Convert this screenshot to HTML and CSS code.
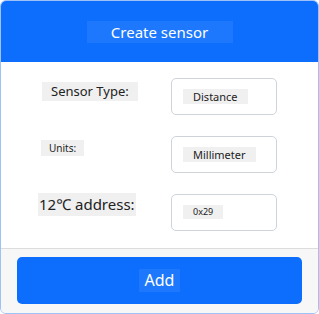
FILE: index.html
```html
<!DOCTYPE html>
<html lang="en">
<head>
    <meta charset="UTF-8">
    <meta name="viewport" content="width=device-width, initial-scale=1.0">
    <title>Create sensor</title>
    <link rel="stylesheet" href="styles.css">
</head>
<body>
    <div class="card">
        <div class="card-header">
            <span class="title">Create sensor</span>
        </div>

        <div class="card-body">
            <div class="form-row">
                <span class="label label-type">Sensor Type:</span>
                <div class="field"><span class="value value-type">Distance</span></div>
            </div>
            <div class="form-row">
                <span class="label label-units">Units:</span>
                <div class="field"><span class="value value-units">Millimeter</span></div>
            </div>
            <div class="form-row row-address">
                <span class="label label-address">12℃ address:</span>
                <div class="field"><span class="value value-address">0x29</span></div>
            </div>
        </div>

        <div class="card-footer">
            <button type="button" class="add-button"><span>Add</span></button>
        </div>
    </div>
</body>
</html>
```

FILE: styles.css
```css
* {
    box-sizing: border-box;
}
body {
    margin: 0;
    font-family: "Noto Sans", "Open Sans", sans-serif;
    background-color: #fff;
    color: #212529;
}
.card {
    width: 319px;
    height: 314px;
    border: 1px solid #9ec2f7;
    border-radius: 6px;
    overflow: hidden;
    display: flex;
    flex-direction: column;
}
.card-header {
    height: 61px;
    background-color: #0d6efd;
    display: flex;
    justify-content: center;
    align-items: center;
}
.title {
    width: 146px;
    height: 22px;
    background-color: rgba(255, 255, 255, 0.07);
    color: #fff;
    font-size: 15px;
    line-height: 22px;
    text-align: center;
}
.card-body {
    flex: 1;
    padding: 16px 0 0 36px;
    display: flex;
    flex-direction: column;
    gap: 21px;
}
.form-row {
    display: grid;
    grid-template-columns: 134px 106px;
    align-items: start;
}
.label {
    justify-self: start;
    background-color: #f0f0f0;
    color: #222;
}
.label-type {
    margin: 4px 0 0 5px;
    padding: 0 9px;
    font-size: 13px;
    line-height: 19px;
}
.label-units {
    margin: 4px 0 0 4px;
    padding: 0 8px;
    font-size: 10px;
    line-height: 16px;
}
.label-address {
    margin: -1px 0 0 1px;
    padding: 0 1px;
    font-size: 15px;
    line-height: 23px;
}
.field {
    height: 37px;
    border: 1px solid #ced4da;
    border-radius: 5px;
    padding: 10px 0 0 11px;
}
.value {
    display: block;
    width: fit-content;
    background-color: #f0f0f0;
    color: #222;
    font-size: 11px;
    line-height: 15px;
}
.value-type {
    padding: 0 10px;
}
.value-units {
    padding: 0 10px;
}
.value-address {
    padding: 0 10px;
    font-size: 9px;
    height: 14px;
    line-height: 14px;
}
.card-footer {
    height: 65px;
    background-color: #f7f7f7;
    border-top: 1px solid #dcdcdc;
    padding: 8px 16px 8px 16px;
}
.add-button {
    width: 285px;
    height: 47px;
    border: none;
    border-radius: 5px;
    background-color: #0d6efd;
    display: flex;
    justify-content: center;
    align-items: center;
    cursor: pointer;
}
.add-button span {
    width: 41px;
    height: 23px;
    background-color: rgba(255, 255, 255, 0.07);
    color: #fff;
    font-family: "Noto Sans", "Open Sans", sans-serif;
    font-size: 16px;
    line-height: 23px;
}
```
